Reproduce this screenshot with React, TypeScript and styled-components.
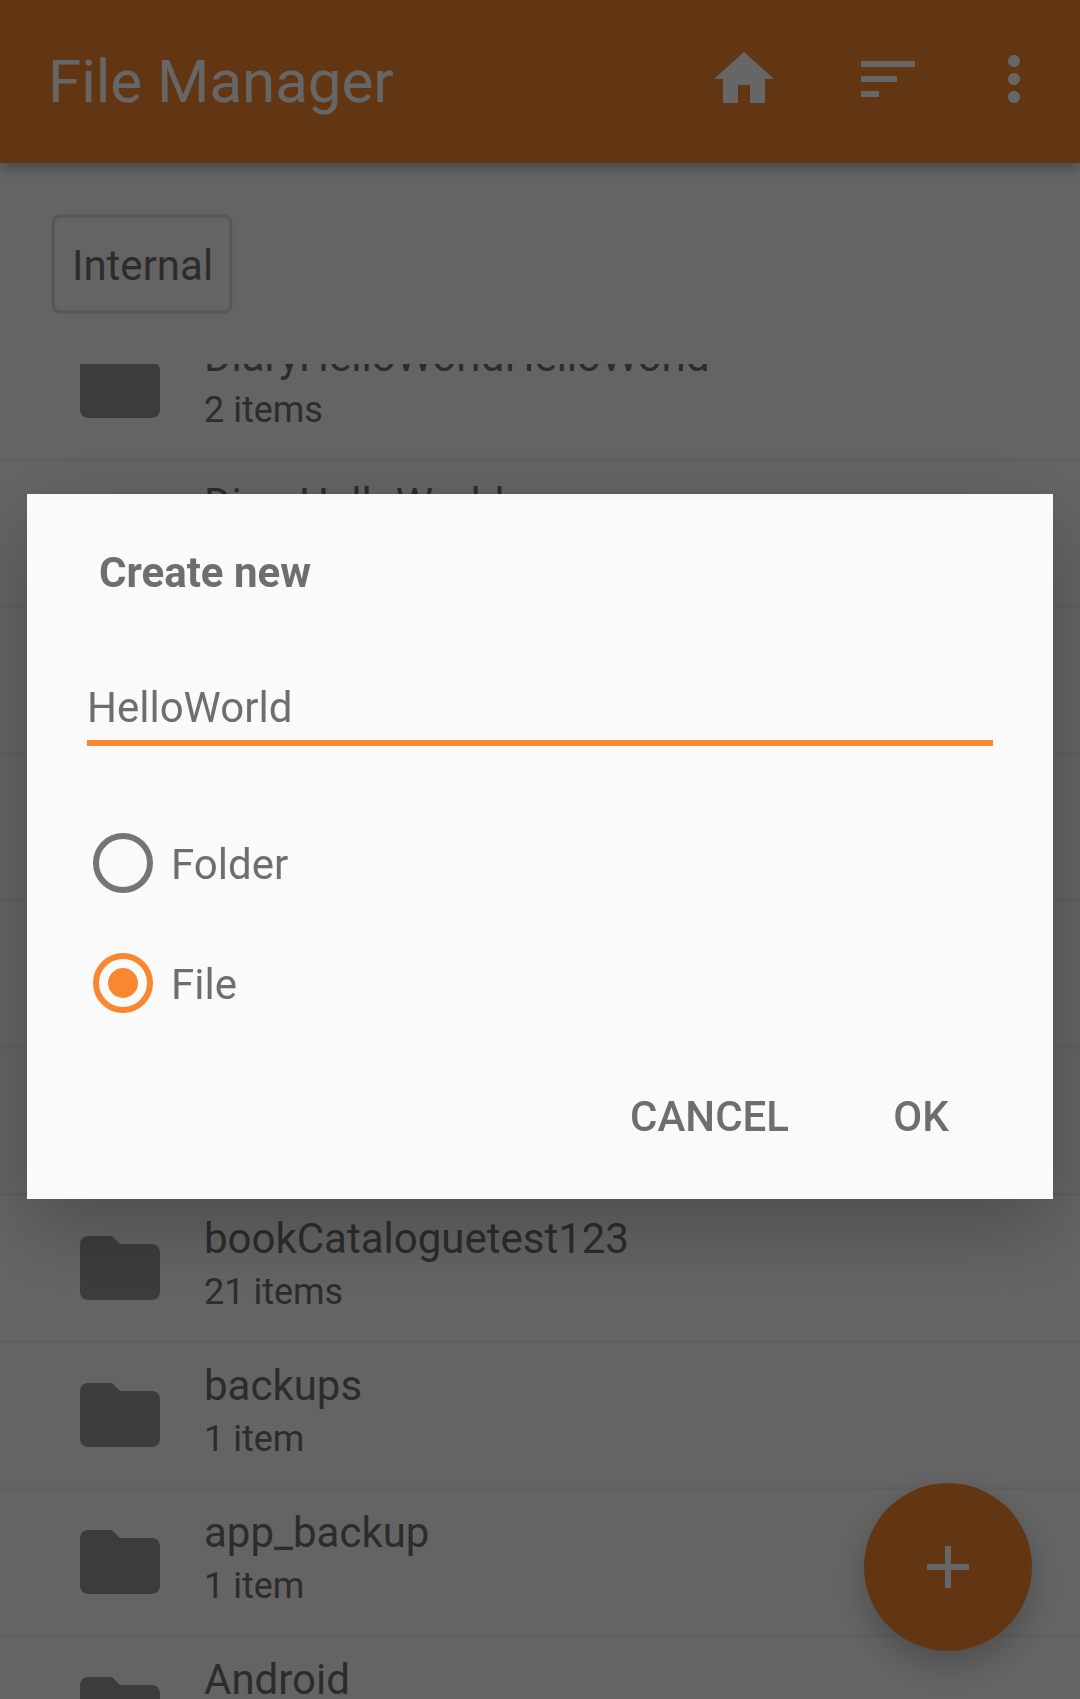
import React, { useLayoutEffect, useRef, useState } from 'react';
import styled, { createGlobalStyle } from 'styled-components';

const color = {
  accent: '#f88730',
  surface: '#fafafa',
  text: '#6e6e6e',
  control: '#757575',
  folder: '#979797',
  divider: '#efefef',
};

const GlobalStyle = createGlobalStyle`
  *, *::before, *::after { box-sizing: border-box; }
  body {
    margin: 0;
    background: ${color.surface};
    color: ${color.text};
    font-family: Roboto, 'Noto Sans', sans-serif;
    font-size: 42px;
    line-height: 50px;
  }
  button, input { font: inherit; color: inherit; }
  h1, h2, ul, p { margin: 0; padding: 0; }
`;

const Screen = styled.div`
  display: flex;
  flex-direction: column;
  height: 100vh;
  overflow: hidden;
`;

const AppBar = styled.header`
  display: flex;
  align-items: center;
  justify-content: space-between;
  flex: none;
  min-height: 163px;
  padding: 0 12px 0 48px;
  background: ${color.accent};
  color: #fff;
  box-shadow: 0 5px 12px rgba(0, 0, 0, 0.28);
`;

const AppTitle = styled.h1`
  font-size: 60px;
  line-height: 72px;
  font-weight: 400;
`;

const Actions = styled.div`
  display: flex;
  padding-bottom: 5px;
`;

const IconButton = styled.button<{ $width: number }>`
  display: flex;
  align-items: center;
  justify-content: center;
  width: ${({ $width }) => $width}px;
  height: 144px;
  padding: 0;
  border: 0;
  background: none;
`;

const Glyph = styled.svg<{ $size: number }>`
  display: block;
  flex: none;
  width: ${({ $size }) => $size}px;
  height: ${({ $size }) => $size}px;
  fill: currentColor;
`;

const Breadcrumbs = styled.nav`
  display: flex;
  flex: none;
  padding: 52px 52px 51px;
`;

const Crumb = styled.button`
  padding: 24px 17px 20px 18px;
  border: 2px solid #d4d4d4;
  border-radius: 8px;
  background: none;
  box-shadow: 0 0 2px rgba(0, 0, 0, 0.15), inset 0 0 2px rgba(0, 0, 0, 0.2);
`;

const FileList = styled.ul`
  flex: 1;
  min-height: 0;
  overflow-y: auto;
  scrollbar-width: none;
  list-style: none;
`;

const FileRow = styled.li`
  display: flex;
  align-items: center;
  gap: 36px;
  height: 147px;
  padding-left: 72px;
  border-bottom: 3px solid ${color.divider};
`;

const FolderGlyph = styled(Glyph)`
  color: ${color.folder};
`;

const FileText = styled.div`
  padding-bottom: 2px;
`;

const FileDetail = styled.p`
  font-size: 36px;
  line-height: 56px;
`;

const AddButton = styled.button`
  position: fixed;
  right: 48px;
  bottom: 48px;
  display: flex;
  align-items: center;
  justify-content: center;
  width: 168px;
  height: 168px;
  padding: 0;
  border: 0;
  border-radius: 50%;
  background: ${color.accent};
  color: #fff;
  box-shadow: 0 14px 32px rgba(0, 0, 0, 0.22);
`;

const Scrim = styled.div`
  position: fixed;
  inset: 0;
  display: flex;
  align-items: center;
  justify-content: center;
  padding: 0 27px 6px;
  background: rgba(0, 0, 0, 0.6);
`;

const Dialog = styled.form`
  display: flex;
  flex-direction: column;
  width: 100%;
  padding: 54px 36px 34px 60px;
  background: ${color.surface};
  box-shadow: 0 28px 80px rgba(0, 0, 0, 0.24);
`;

const DialogTitle = styled.h2`
  padding-left: 12px;
  font-size: 42px;
  font-weight: 700;
`;

const NameInput = styled.input`
  height: 63px;
  margin: 85px 24px 57px 0;
  padding: 0 0 8px;
  border: 0;
  border-bottom: 6px solid ${color.accent};
  border-radius: 0;
  background: none;
  outline: none;
`;

const Option = styled.label`
  display: flex;
  align-items: center;
  gap: 18px;
  height: 120px;
  padding-left: 6px;
`;

const OptionText = styled.span`
  padding-top: 4px;
`;

const Radio = styled.input`
  appearance: none;
  flex: none;
  width: 60px;
  height: 60px;
  margin: 0;
  padding: 9px;
  border: 6px solid ${color.control};
  border-radius: 50%;

  &:checked {
    border-color: ${color.accent};
    background: ${color.accent} content-box;
  }
`;

const DialogActions = styled.div`
  display: flex;
  justify-content: flex-end;
  margin-top: 26px;
`;

const DialogButton = styled.button`
  min-width: 192px;
  height: 96px;
  padding: 0 36px;
  border: 0;
  background: none;
  font-weight: 500;
  text-transform: uppercase;
`;

const paths = {
  home: 'M10 20v-6h4v6h5v-8h3L12 3 2 12h3v8z',
  sort: 'M3 18h6v-2H3v2zM3 6v2h18V6H3zm0 7h12v-2H3v2z',
  more: 'M12 8c1.1 0 2-.9 2-2s-.9-2-2-2-2 .9-2 2 .9 2 2 2zm0 2c-1.1 0-2 .9-2 2s.9 2 2 2 2-.9 2-2-.9-2-2-2zm0 6c-1.1 0-2 .9-2 2s.9 2 2 2 2-.9 2-2-.9-2-2-2z',
  folder: 'M10 4H4c-1.1 0-1.99.9-1.99 2L2 18c0 1.1.9 2 2 2h16c1.1 0 2-.9 2-2V8c0-1.1-.9-2-2-2h-8l-2-2z',
  add: 'M19 13h-6v6h-2v-6H5v-2h6V5h2v6h6z',
};

function Icon({ name }: { name: keyof typeof paths }) {
  return (
    <Glyph $size={72} viewBox="0 0 24 24" aria-hidden="true">
      <path d={paths[name]} />
    </Glyph>
  );
}

interface Entry {
  name?: string;
  detail?: string;
}

const entries: Entry[] = [
  { name: 'DiaryHelloWorldHelloWorld', detail: '2 items' },
  { name: 'DiaryHelloWorld' },
  {},
  {},
  {},
  {},
  { name: 'bookCataloguetest123', detail: '21 items' },
  { name: 'backups', detail: '1 item' },
  { name: 'app_backup', detail: '1 item' },
  { name: 'Android' },
];

const kinds = ['Folder', 'File'];
const initialScroll = 50;

export default function App() {
  const listRef = useRef<HTMLUListElement>(null);
  const [name, setName] = useState('HelloWorld');
  const [kind, setKind] = useState('File');

  useLayoutEffect(() => {
    if (listRef.current) listRef.current.scrollTop = initialScroll;
  }, []);

  return (
    <>
      <GlobalStyle />
      <Screen>
        <AppBar>
          <AppTitle>File Manager</AppTitle>
          <Actions>
            <IconButton $width={144} aria-label="Home"><Icon name="home" /></IconButton>
            <IconButton $width={144} aria-label="Sort"><Icon name="sort" /></IconButton>
            <IconButton $width={108} aria-label="More options"><Icon name="more" /></IconButton>
          </Actions>
        </AppBar>
        <Breadcrumbs>
          <Crumb>Internal</Crumb>
        </Breadcrumbs>
        <FileList ref={listRef}>
          {entries.map((entry, index) => (
            <FileRow key={index}>
              <FolderGlyph $size={96} viewBox="0 0 24 24" aria-hidden="true">
                <path d={paths.folder} />
              </FolderGlyph>
              <FileText>
                <p>{entry.name}</p>
                <FileDetail>{entry.detail ?? '\u00a0'}</FileDetail>
              </FileText>
            </FileRow>
          ))}
        </FileList>
        <AddButton aria-label="Add"><Icon name="add" /></AddButton>
      </Screen>
      <Scrim>
        <Dialog
          role="dialog"
          aria-modal="true"
          aria-labelledby="dialog-title"
          onSubmit={(event) => event.preventDefault()}
        >
          <DialogTitle id="dialog-title">Create new</DialogTitle>
          <NameInput
            type="text"
            aria-label="Name"
            spellCheck={false}
            value={name}
            onChange={(event) => setName(event.target.value)}
          />
          {kinds.map((option) => (
            <Option key={option}>
              <Radio
                type="radio"
                name="kind"
                value={option}
                checked={kind === option}
                onChange={() => setKind(option)}
              />
              <OptionText>{option}</OptionText>
            </Option>
          ))}
          <DialogActions>
            <DialogButton type="button">Cancel</DialogButton>
            <DialogButton type="submit">OK</DialogButton>
          </DialogActions>
        </Dialog>
      </Scrim>
    </>
  );
}
